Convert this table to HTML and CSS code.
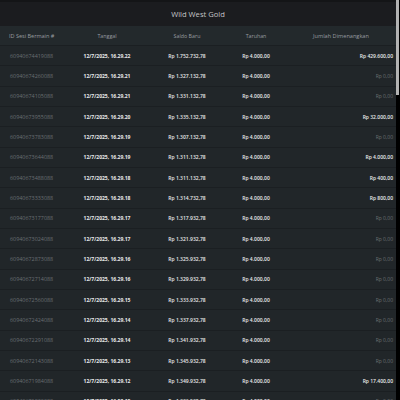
FILE: index.html
```html
<!DOCTYPE html>
<html lang="id">
<head>
<meta charset="utf-8">
<title>Wild West Gold</title>
<link rel="stylesheet" href="styles.css">
</head>
<body>
<div class="page">
  <header class="title-bar"><h1 class="title">Wild West Gold</h1></header>
  <div class="table">
    <div class="row head">
      <div class="cell id">ID Sesi Bermain #</div>
      <div class="cell date">Tanggal</div>
      <div class="cell bal">Saldo Baru</div>
      <div class="cell bet">Taruhan</div>
      <div class="cell win">Jumlah Dimenangkan</div>
    </div>
    <div class="row"><div class="cell id">60940674419088</div><div class="cell date">12/7/2025, 16.29.22</div><div class="cell bal">Rp 1.752.732,78</div><div class="cell bet">Rp 4.000,00</div><div class="cell win">Rp 429.600,00</div></div>
    <div class="row"><div class="cell id">60940674260088</div><div class="cell date">12/7/2025, 16.29.21</div><div class="cell bal">Rp 1.327.132,78</div><div class="cell bet">Rp 4.000,00</div><div class="cell win zero">Rp 0,00</div></div>
    <div class="row"><div class="cell id">60940674105088</div><div class="cell date">12/7/2025, 16.29.21</div><div class="cell bal">Rp 1.331.132,78</div><div class="cell bet">Rp 4.000,00</div><div class="cell win zero">Rp 0,00</div></div>
    <div class="row"><div class="cell id">60940673955088</div><div class="cell date">12/7/2025, 16.29.20</div><div class="cell bal">Rp 1.335.132,78</div><div class="cell bet">Rp 4.000,00</div><div class="cell win">Rp 32.000,00</div></div>
    <div class="row"><div class="cell id">60940673783088</div><div class="cell date">12/7/2025, 16.29.19</div><div class="cell bal">Rp 1.307.132,78</div><div class="cell bet">Rp 4.000,00</div><div class="cell win zero">Rp 0,00</div></div>
    <div class="row"><div class="cell id">60940673644088</div><div class="cell date">12/7/2025, 16.29.19</div><div class="cell bal">Rp 1.311.132,78</div><div class="cell bet">Rp 4.000,00</div><div class="cell win">Rp 4.000,00</div></div>
    <div class="row"><div class="cell id">60940673488088</div><div class="cell date">12/7/2025, 16.29.18</div><div class="cell bal">Rp 1.311.132,78</div><div class="cell bet">Rp 4.000,00</div><div class="cell win">Rp 400,00</div></div>
    <div class="row"><div class="cell id">60940673333088</div><div class="cell date">12/7/2025, 16.29.18</div><div class="cell bal">Rp 1.314.732,78</div><div class="cell bet">Rp 4.000,00</div><div class="cell win">Rp 800,00</div></div>
    <div class="row"><div class="cell id">60940673177088</div><div class="cell date">12/7/2025, 16.29.17</div><div class="cell bal">Rp 1.317.932,78</div><div class="cell bet">Rp 4.000,00</div><div class="cell win zero">Rp 0,00</div></div>
    <div class="row"><div class="cell id">60940673024088</div><div class="cell date">12/7/2025, 16.29.17</div><div class="cell bal">Rp 1.321.932,78</div><div class="cell bet">Rp 4.000,00</div><div class="cell win zero">Rp 0,00</div></div>
    <div class="row"><div class="cell id">60940672873088</div><div class="cell date">12/7/2025, 16.29.16</div><div class="cell bal">Rp 1.325.932,78</div><div class="cell bet">Rp 4.000,00</div><div class="cell win zero">Rp 0,00</div></div>
    <div class="row"><div class="cell id">60940672714088</div><div class="cell date">12/7/2025, 16.29.16</div><div class="cell bal">Rp 1.329.932,78</div><div class="cell bet">Rp 4.000,00</div><div class="cell win zero">Rp 0,00</div></div>
    <div class="row"><div class="cell id">60940672560088</div><div class="cell date">12/7/2025, 16.29.15</div><div class="cell bal">Rp 1.333.932,78</div><div class="cell bet">Rp 4.000,00</div><div class="cell win zero">Rp 0,00</div></div>
    <div class="row"><div class="cell id">60940672424088</div><div class="cell date">12/7/2025, 16.29.14</div><div class="cell bal">Rp 1.337.932,78</div><div class="cell bet">Rp 4.000,00</div><div class="cell win zero">Rp 0,00</div></div>
    <div class="row"><div class="cell id">60940672291088</div><div class="cell date">12/7/2025, 16.29.14</div><div class="cell bal">Rp 1.341.932,78</div><div class="cell bet">Rp 4.000,00</div><div class="cell win zero">Rp 0,00</div></div>
    <div class="row"><div class="cell id">60940672143088</div><div class="cell date">12/7/2025, 16.29.13</div><div class="cell bal">Rp 1.345.932,78</div><div class="cell bet">Rp 4.000,00</div><div class="cell win zero">Rp 0,00</div></div>
    <div class="row"><div class="cell id">60940671984088</div><div class="cell date">12/7/2025, 16.29.12</div><div class="cell bal">Rp 1.349.932,78</div><div class="cell bet">Rp 4.000,00</div><div class="cell win">Rp 17.400,00</div></div>
    <div class="row"><div class="cell id">60940671830088</div><div class="cell date">12/7/2025, 16.29.12</div><div class="cell bal">Rp 1.336.532,78</div><div class="cell bet">Rp 4.000,00</div><div class="cell win zero">Rp 0,00</div></div>
  </div>
</div>
<div class="scrollbar"><div class="thumb"></div></div>
</body>
</html>
```
FILE: styles.css
```css
html {
  background: #212629;
}
body {
  margin: 0;
  height: 100vh;
  display: flex;
  overflow: hidden;
  font-family: "Open Sans", "Noto Sans", sans-serif;
  color: #e9eaeb;
}
.page {
  flex: 1;
  min-width: 0;
  height: 100vh;
  overflow: hidden;
}
.scrollbar {
  width: 4px;
  height: 100vh;
  background: #000;
  display: flex;
  flex-direction: column;
}
.thumb {
  width: 3px;
  height: 95px;
  background: #b3b3b3;
}
.title-bar {
  height: 26px;
  box-sizing: border-box;
  border-top: 2px solid #141517;
  background: #1b1c1f;
  display: flex;
  align-items: center;
  justify-content: center;
}
.title {
  margin: 0;
  font-size: 7.6px;
  font-weight: 400;
  color: #c4c5c7;
}
.table {
  display: flex;
  flex-direction: column;
}
.row {
  display: grid;
  grid-template-columns: 70px 74px 86px 52px 1fr;
  align-items: center;
  flex: none;
  height: 20.33px;
  box-sizing: border-box;
  border-bottom: 1px solid #1b1f22;
  font-size: 5px;
}
.row.head {
  height: 20px;
  background: #23292c;
  color: #989ca0;
  font-size: 5.3px;
}
.cell {
  white-space: nowrap;
}
.id {
  padding-left: 10px;
  color: #6a6f73;
  font-size: 5.4px;
}
.head .id {
  padding-left: 9px;
  color: #989ca0;
  font-size: 5.5px;
}
.date {
  text-align: center;
  font-weight: 700;
}
.bal {
  text-align: center;
  font-weight: 600;
}
.bet {
  text-align: center;
  font-weight: 600;
}
.win {
  text-align: right;
  padding-right: 3px;
  font-weight: 600;
}
.head .cell {
  font-weight: 400;
}
.head .win {
  text-align: center;
  padding: 0 0 0 4px;
  font-size: 5.6px;
}
.win.zero {
  color: #6a6f73;
  font-weight: 400;
}
```
